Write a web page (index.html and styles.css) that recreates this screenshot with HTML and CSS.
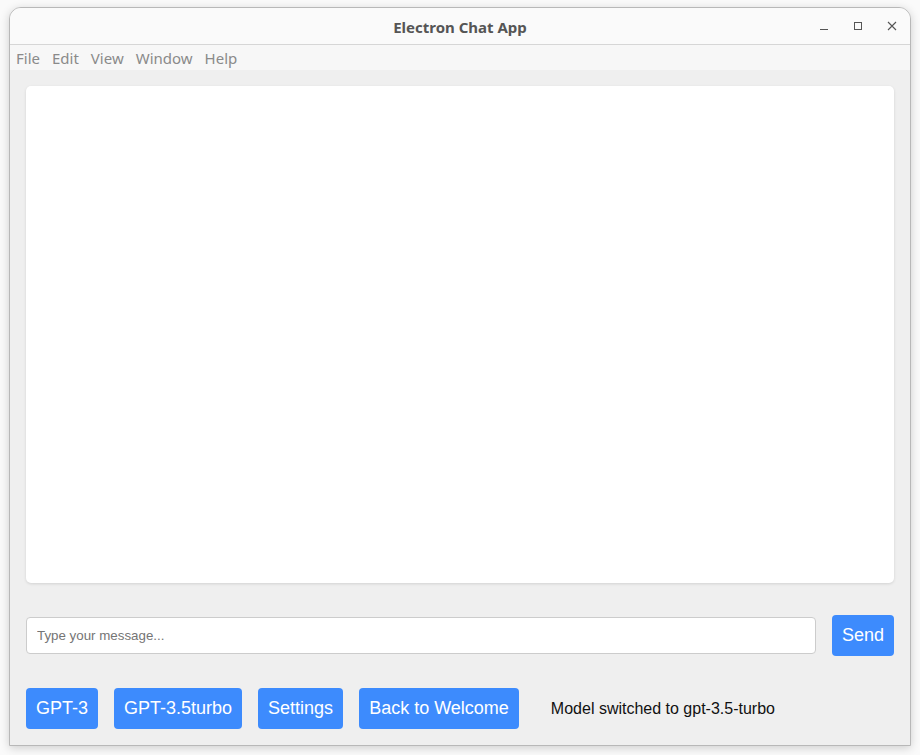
FILE: index.html
```html
<!DOCTYPE html>
<html>
<head>
<meta charset="utf-8">
<link rel="stylesheet" href="styles.css">
</head>
<body>
<div class="window">
  <div class="titlebar">
    <div class="title">Electron Chat App</div>
    <div class="controls">
      <svg class="ctl" width="12" height="12" viewBox="0 0 12 12"><line x1="2" y1="9.5" x2="10" y2="9.5" stroke="#555" stroke-width="1"/></svg>
      <svg class="ctl" width="12" height="12" viewBox="0 0 12 12"><rect x="2.5" y="2.5" width="7" height="7" fill="none" stroke="#555" stroke-width="1"/></svg>
      <svg class="ctl" width="12" height="12" viewBox="0 0 12 12"><path d="M2 2 L10 10 M10 2 L2 10" stroke="#555" stroke-width="1.1"/></svg>
    </div>
  </div>
  <div class="menubar">
    <span>File</span><span>Edit</span><span>View</span><span>Window</span><span>Help</span>
  </div>
  <div class="content">
    <div class="chat"></div>
    <div class="input-row">
      <input class="msg" type="text" placeholder="Type your message...">
      <button class="btn">Send</button>
    </div>
    <div class="actions">
      <button class="btn">GPT-3</button>
      <button class="btn">GPT-3.5turbo</button>
      <button class="btn">Settings</button>
      <button class="btn">Back to Welcome</button>
      <span class="status">Model switched to gpt-3.5-turbo</span>
    </div>
  </div>
</div>
</body>
</html>
```
FILE: styles.css
```css
* { box-sizing: border-box; }
html, body { margin: 0; padding: 0; }
body {
  width: 920px;
  height: 755px;
  background: #fafafa;
  padding: 7px 9px 9px 9px;
  overflow: hidden;
}
.window {
  width: 902px;
  height: 739px;
  border: 1px solid #b8b8b8;
  border-radius: 12px 12px 0 0;
  background: #efefef;
  box-shadow: 0 2px 10px rgba(0,0,0,0.18);
  display: flex;
  flex-direction: column;
  overflow: hidden;
}
.titlebar {
  height: 37px;
  background: #fafafa;
  border-bottom: 1px solid #d6d6d6;
  position: relative;
  display: flex;
  align-items: center;
  justify-content: center;
}
.title {
  font-family: "Noto Sans", "DejaVu Sans", sans-serif;
  font-weight: bold;
  font-size: 15px;
  color: #555;
  margin-top: 1px;
}
.controls {
  position: absolute;
  right: 12px;
  top: 12px;
  display: flex;
  gap: 22px;
}
.ctl { display: block; }
.menubar {
  height: 25px;
  background: #f7f7f7;
  display: flex;
  align-items: center;
  gap: 12px;
  padding-left: 6px;
  font-family: "Noto Sans", "DejaVu Sans", sans-serif;
  font-size: 15px;
  color: #8a8a8a;
}
.content {
  flex: 1;
  padding: 16px 16px 0 16px;
  display: flex;
  flex-direction: column;
  font-family: "Liberation Sans", Arial, sans-serif;
}
.chat {
  height: 497px;
  background: #fff;
  border-radius: 5px;
  box-shadow: 0 1px 3px rgba(0,0,0,0.12);
}
.input-row {
  margin-top: 32px;
  display: flex;
  align-items: center;
  gap: 16px;
}
.msg {
  flex: 1;
  height: 37px;
  border: 1px solid #cccccc;
  border-radius: 4px;
  padding: 0 10px;
  font-family: "Liberation Sans", Arial, sans-serif;
  font-size: 13.333px;
  color: #333;
  background: #fff;
  outline: none;
}
.msg::placeholder { color: #757575; }
.btn {
  font-family: "Liberation Sans", Arial, sans-serif;
  font-size: 18px;
  line-height: 21px;
  padding: 10px 10px;
  border: none;
  border-radius: 4px;
  background: #3d8bfd;
  color: #fff;
  cursor: pointer;
}
.actions {
  margin-top: 32px;
  display: flex;
  align-items: center;
  gap: 16px;
}
.status {
  margin-left: 16px;
  font-size: 16px;
  color: #111;
}
```
